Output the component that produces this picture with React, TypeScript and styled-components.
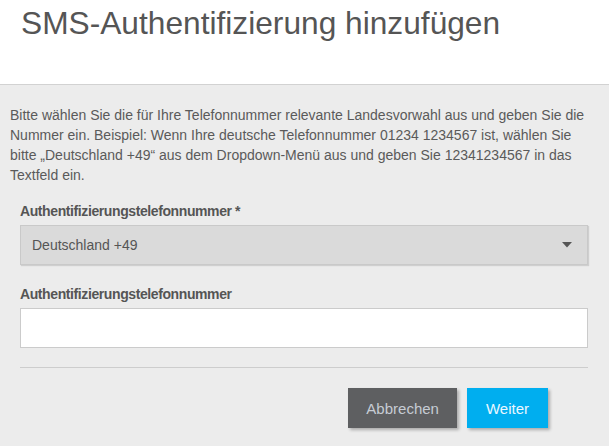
import React from 'react';
import styled, { createGlobalStyle } from 'styled-components';

const GlobalStyle = createGlobalStyle`
  html, body {
    margin: 0;
    padding: 0;
    background: #ececec;
    font-family: "Liberation Sans", Arial, sans-serif;
  }
`;

const Page = styled.div`
  width: 609px;
  height: 446px;
  background: #ececec;
  overflow: hidden;
`;

const Header = styled.header`
  height: 85px;
  box-sizing: border-box;
  background: #fff;
  border-bottom: 1px solid #d2d2d2;
  padding: 5px 0 0 21px;
`;

const Title = styled.h1`
  margin: 0;
  font-size: 31.7px;
  line-height: 36px;
  font-weight: normal;
  color: #555;
`;

const Body = styled.div`
  padding: 20px 10px 0 10px;
`;

const Intro = styled.p`
  margin: 0;
  font-size: 14px;
  line-height: 20px;
  color: #5a5a5a;
`;

const Form = styled.div`
  display: flex;
  flex-direction: column;
  padding: 16px 11px 0 10px;
`;

const Label = styled.label`
  display: block;
  font-family: "Liberation Sans", Arial, sans-serif;
  font-weight: bold;
  font-size: 14px;
  letter-spacing: -0.4px;
  line-height: 20px;
  color: #555;
  margin-bottom: 4px;
`;

const Field = styled.div<{ $gap?: number }>`
  margin-top: ${p => p.$gap ?? 0}px;
`;

const Select = styled.div`
  height: 40px;
  box-sizing: border-box;
  display: flex;
  align-items: center;
  justify-content: space-between;
  padding: 0 15px 0 11px;
  background: #dadada;
  border: 1px solid #c9c9c9;
  box-shadow: 1px 1px 1px rgba(0, 0, 0, 0.12);
  font-size: 14px;
  color: #555;
`;

const Input = styled.input`
  display: block;
  width: 100%;
  height: 40px;
  box-sizing: border-box;
  background: #fff;
  border: 1px solid #cbcbcb;
  outline: none;
  font-size: 14px;
`;

const Divider = styled.hr`
  margin: 19px 0 0 0;
  border: 0;
  border-top: 1px solid #cdcdcd;
`;

const Actions = styled.div`
  display: flex;
  justify-content: flex-end;
  gap: 10px;
  padding: 20px 51px 0 0;
`;

const Button = styled.button<{ $primary?: boolean }>`
  height: 40px;
  padding: 0 ${p => (p.$primary ? 19 : 18)}px;
  border: 0;
  border-radius: 0;
  font-family: "Liberation Sans", Arial, sans-serif;
  font-size: 15px;
  background: ${p => (p.$primary ? '#00aeef' : '#5e5f61')};
  color: ${p => (p.$primary ? '#eaf7ff' : '#c6ccd4')};
  box-shadow: 2px 2px 3px rgba(0, 0, 0, 0.28);
`;

const Caret = () => (
  <svg width="10" height="6" viewBox="0 0 10 6">
    <path d="M0 0 H10 L5 5.5 Z" fill="#555" />
  </svg>
);

export default function App() {
  return (
    <Page>
      <GlobalStyle />
      <Header>
        <Title>SMS-Authentifizierung hinzufügen</Title>
      </Header>
      <Body>
        <Intro>
          Bitte wählen Sie die für Ihre Telefonnummer relevante Landesvorwahl aus und geben Sie die
          Nummer ein. Beispiel: Wenn Ihre deutsche Telefonnummer 01234 1234567 ist, wählen Sie
          bitte „Deutschland +49“ aus dem Dropdown-Menü aus und geben Sie 12341234567 in das
          Textfeld ein.
        </Intro>
        <Form>
          <Field>
            <Label>Authentifizierungstelefonnummer *</Label>
            <Select>
              <span>Deutschland +49</span>
              <Caret />
            </Select>
          </Field>
          <Field $gap={19}>
            <Label>Authentifizierungstelefonnummer</Label>
            <Input type="text" />
          </Field>
          <Divider />
        </Form>
        <Actions>
          <Button>Abbrechen</Button>
          <Button $primary>Weiter</Button>
        </Actions>
      </Body>
    </Page>
  );
}
